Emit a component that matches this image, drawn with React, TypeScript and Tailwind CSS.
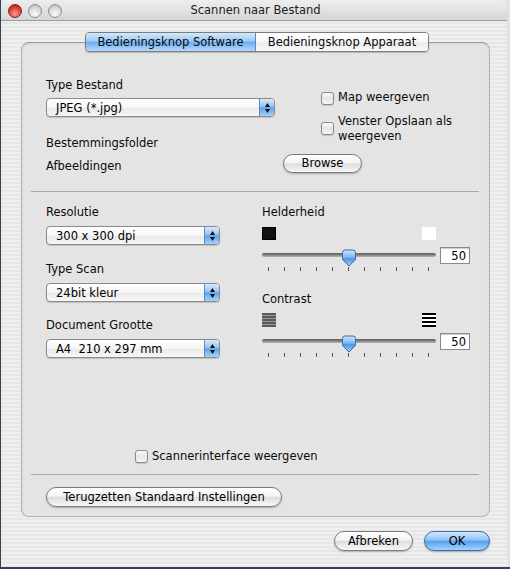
import React from "react"

const stripes =
  "bg-[image:repeating-linear-gradient(180deg,#efefef_0px,#efefef_2px,#e7e7e7_2px,#e7e7e7_4px)]"

function Popup({ width, label }: { width: string; label: string }) {
  return (
    <div
      className={`${width} h-[19px] flex rounded-[4px] border border-[#8a8a8a] bg-[linear-gradient(to_bottom,#ffffff,#f6f6f6_50%,#e9e9e9_55%,#f7f7f7)] shadow-[0_1px_1px_rgba(0,0,0,0.15)]`}
    >
      <span className="flex-1 pl-[9px] leading-[18px] text-black whitespace-pre">{label}</span>
      <div className="w-[15px] rounded-r-[3px] border-l border-[#5d88c2] bg-[linear-gradient(to_bottom,#d6eafc,#93c4f2_45%,#5ea3ea_52%,#a5d2fa)] flex flex-col items-center justify-center gap-[2px]">
        <svg width="5" height="4" viewBox="0 0 5 4">
          <path d="M2.5 0 L5 4 L0 4 Z" fill="#111" />
        </svg>
        <svg width="5" height="4" viewBox="0 0 5 4">
          <path d="M0 0 L5 0 L2.5 4 Z" fill="#111" />
        </svg>
      </div>
    </div>
  )
}

function Check() {
  return (
    <div className="w-[13px] h-[13px] shrink-0 rounded-[3px] border border-[#8a8a8a] bg-[linear-gradient(to_bottom,#fafafa,#e6e6e6_50%,#f6f6f6)] shadow-[0_1px_1px_rgba(0,0,0,0.15)]" />
  )
}

function Button({ className, children }: { className: string; children: React.ReactNode }) {
  return (
    <div
      className={`${className} flex items-center justify-center pt-px rounded-full border border-[#7b7b7b] bg-[linear-gradient(to_bottom,#ffffff,#f3f3f3_45%,#dedede_52%,#f7f7f7)] shadow-[0_1px_2px_rgba(0,0,0,0.25)] text-black`}
    >
      {children}
    </div>
  )
}

function Slider() {
  const ticks = Array.from({ length: 11 }, (_, i) => i)
  return (
    <div className="flex items-start">
      <div className="relative w-[174px] h-[26px]">
        <div className="absolute left-0 right-0 top-[7px] h-[4px] rounded-full bg-[linear-gradient(to_bottom,#5a5a5a,#8c8c8c_60%,#b8b8b8)]" />
        <svg className="absolute left-[79px] top-[3px]" width="16" height="18" viewBox="0 0 16 18">
          <defs>
            <linearGradient id="th" x1="0" y1="0" x2="0" y2="1">
              <stop offset="0" stopColor="#cde6fd" />
              <stop offset="0.45" stopColor="#7fb7ee" />
              <stop offset="0.55" stopColor="#4b95e3" />
              <stop offset="1" stopColor="#a9d4fb" />
            </linearGradient>
          </defs>
          <path
            d="M1.5 3.5 Q1.5 1 4 1 H12 Q14.5 1 14.5 3.5 V10.5 L8 17 L1.5 10.5 Z"
            fill="url(#th)"
            stroke="#3b6aa6"
            strokeWidth="1"
          />
        </svg>
        {ticks.map((i) => (
          <div
            key={i}
            className="absolute top-[21px] w-px h-[4px] bg-[#555]"
            style={{ left: 6 + i * 16 }}
          />
        ))}
      </div>
      <div className="ml-[4px] mt-px w-[30px] h-[17px] border border-[#8a8a8a] bg-white text-right pr-[3px] leading-[16px] text-black shadow-[inset_0_1px_1px_rgba(0,0,0,0.2)]">
        50
      </div>
    </div>
  )
}

function Light({ red }: { red?: boolean }) {
  return (
    <div
      className={
        red
          ? "w-[14px] h-[14px] rounded-full border border-[#7a2020] bg-[radial-gradient(circle_at_50%_75%,#ff9b8f,#e0403c_55%,#9e1c1c)]"
          : "w-[14px] h-[14px] rounded-full border border-[#8e8e8e] bg-[radial-gradient(circle_at_50%_75%,#fbfbfb,#dadada_55%,#b0b0b0)]"
      }
    />
  )
}

export default function App() {
  return (
    <div className="w-[510px] h-[569px] overflow-hidden border-l border-b-2 border-[#36405a] bg-[#e2e2e2] font-['DejaVu_Sans',sans-serif] text-[11.5px] text-[#0a0a0a]">
      <div className={`w-[506px] h-[567px] rounded-t-[6px] overflow-hidden ${stripes}`}>
        {/* title bar */}
        <div className="h-[21px] pt-[2px] grid grid-cols-[1fr_auto_1fr] items-center border-b border-[#9a9a9a] bg-[linear-gradient(to_bottom,#eeeeee,#d6d6d6)]">
          <div className="flex gap-[6px] pl-[7px]">
            <Light red />
            <Light />
            <Light />
          </div>
          <div className="text-[#1c1c1c] pl-[3px]">Scannen naar Bestand</div>
          <div />
        </div>

        <div className="ml-[20px] w-[469px]">
          {/* tabs */}
          <div className="mt-[11px] relative z-10 flex justify-center pl-[3px]">
            <div className="flex h-[20px] rounded-[4px] border border-[#7c7c7c] overflow-hidden shadow-[0_1px_1px_rgba(0,0,0,0.2)]">
              <div className="w-[170px] pt-px flex items-center justify-center bg-[linear-gradient(to_bottom,#d3e8fc,#9ccaf5_45%,#6baeef_52%,#b3dafc)] border-r border-[#5f87bb]">
                Bedieningsknop Software
              </div>
              <div className="w-[172px] pt-px flex items-center justify-center bg-[linear-gradient(to_bottom,#ffffff,#f6f6f6_50%,#ebebeb_55%,#fafafa)]">
                Bedieningsknop Apparaat
              </div>
            </div>
          </div>

          {/* group box */}
          <div className="-mt-[10px] h-[475px] rounded-[8px] border border-[#b3b3b3] border-t-[#9a9a9a] bg-[#e4e4e4] shadow-[inset_0_1px_2px_rgba(0,0,0,0.08)]">
            {/* top section */}
            <div className="h-[148px] flex pl-[24px]">
              <div className="w-[229px] pt-[35px]">
                <div className="leading-[14px]">Type Bestand</div>
                <div className="mt-[6px]">
                  <Popup width="w-[229px]" label="JPEG (*.jpg)" />
                </div>
                <div className="mt-[19px] leading-[14px]">Bestemmingsfolder</div>
                <div className="mt-[9px] leading-[14px]">Afbeeldingen</div>
              </div>
              <div className="ml-[8px] pt-[48px]">
                <div className="ml-[38px] flex items-center gap-[4px] h-[14px]">
                  <Check />
                  <span>Map weergeven</span>
                </div>
                <div className="ml-[38px] mt-[8px] flex items-center gap-[4px]">
                  <Check />
                  <span className="leading-[15px] pt-px">
                    Venster Opslaan als
                    <br />
                    weergeven
                  </span>
                </div>
                <Button className="mt-[10px] w-[79px] h-[19px]">Browse</Button>
              </div>
            </div>

            <div className="ml-[9px] w-[448px] h-px bg-[#a8a8a8]" />

            {/* middle section */}
            <div className="h-[282px] pl-[24px]">
              <div className="flex pt-[13px]">
                <div className="w-[174px]">
                  <div className="leading-[14px]">Resolutie</div>
                  <div className="mt-[7px]">
                    <Popup width="w-[174px]" label="300 x 300 dpi" />
                  </div>
                  <div className="mt-[17px] leading-[14px]">Type Scan</div>
                  <div className="mt-[7px]">
                    <Popup width="w-[174px]" label="24bit kleur" />
                  </div>
                  <div className="mt-[16px] leading-[14px]">Document Grootte</div>
                  <div className="mt-[7px]">
                    <Popup width="w-[174px]" label="A4  210 x 297 mm" />
                  </div>
                </div>
                <div className="ml-[42px] w-[210px]">
                  <div className="leading-[14px]">Helderheid</div>
                  <div className="mt-[8px] w-[174px] flex justify-between">
                    <div className="w-[14px] h-[13px] bg-[#111] border border-[#000]" />
                    <div className="w-[14px] h-[13px] bg-white" />
                  </div>
                  <div className="mt-[6px]">
                    <Slider />
                  </div>
                  <div className="mt-[20px] leading-[14px]">Contrast</div>
                  <div className="mt-[7px] w-[174px] flex justify-between">
                    <div className="w-[14px] h-[14px] bg-[image:repeating-linear-gradient(180deg,#5a5a5a_0px,#5a5a5a_2px,#9a9a9a_2px,#9a9a9a_3px)]" />
                    <div className="w-[14px] h-[14px] bg-[image:repeating-linear-gradient(180deg,#000_0px,#000_2px,#ffffff_2px,#ffffff_4px)]" />
                  </div>
                  <div className="mt-[5px]">
                    <Slider />
                  </div>
                </div>
              </div>
              <div className="mt-[91px] ml-[89px] flex items-center gap-[4px] h-[14px]">
                <Check />
                <span className="pt-px">Scannerinterface weergeven</span>
              </div>
            </div>

            <div className="ml-[9px] w-[448px] h-px bg-[#a8a8a8]" />

            {/* bottom section */}
            <div className="pt-[12px] pl-[24px]">
              <Button className="w-[236px] h-[20px]">Terugzetten Standaard Instellingen</Button>
            </div>
          </div>

          {/* dialog buttons */}
          <div className="mt-[14px] flex justify-end gap-[11px]">
            <Button className="w-[79px] h-[20px]">Afbreken</Button>
            <div className="w-[66px] h-[20px] pt-px flex items-center justify-center rounded-full border border-[#3b6cae] bg-[linear-gradient(to_bottom,#d2e9fd,#8fc3f4_45%,#559ff0_52%,#a4d3fc)] shadow-[0_1px_2px_rgba(0,0,0,0.3)] text-black">
              OK
            </div>
          </div>
        </div>
      </div>
    </div>
  )
}
